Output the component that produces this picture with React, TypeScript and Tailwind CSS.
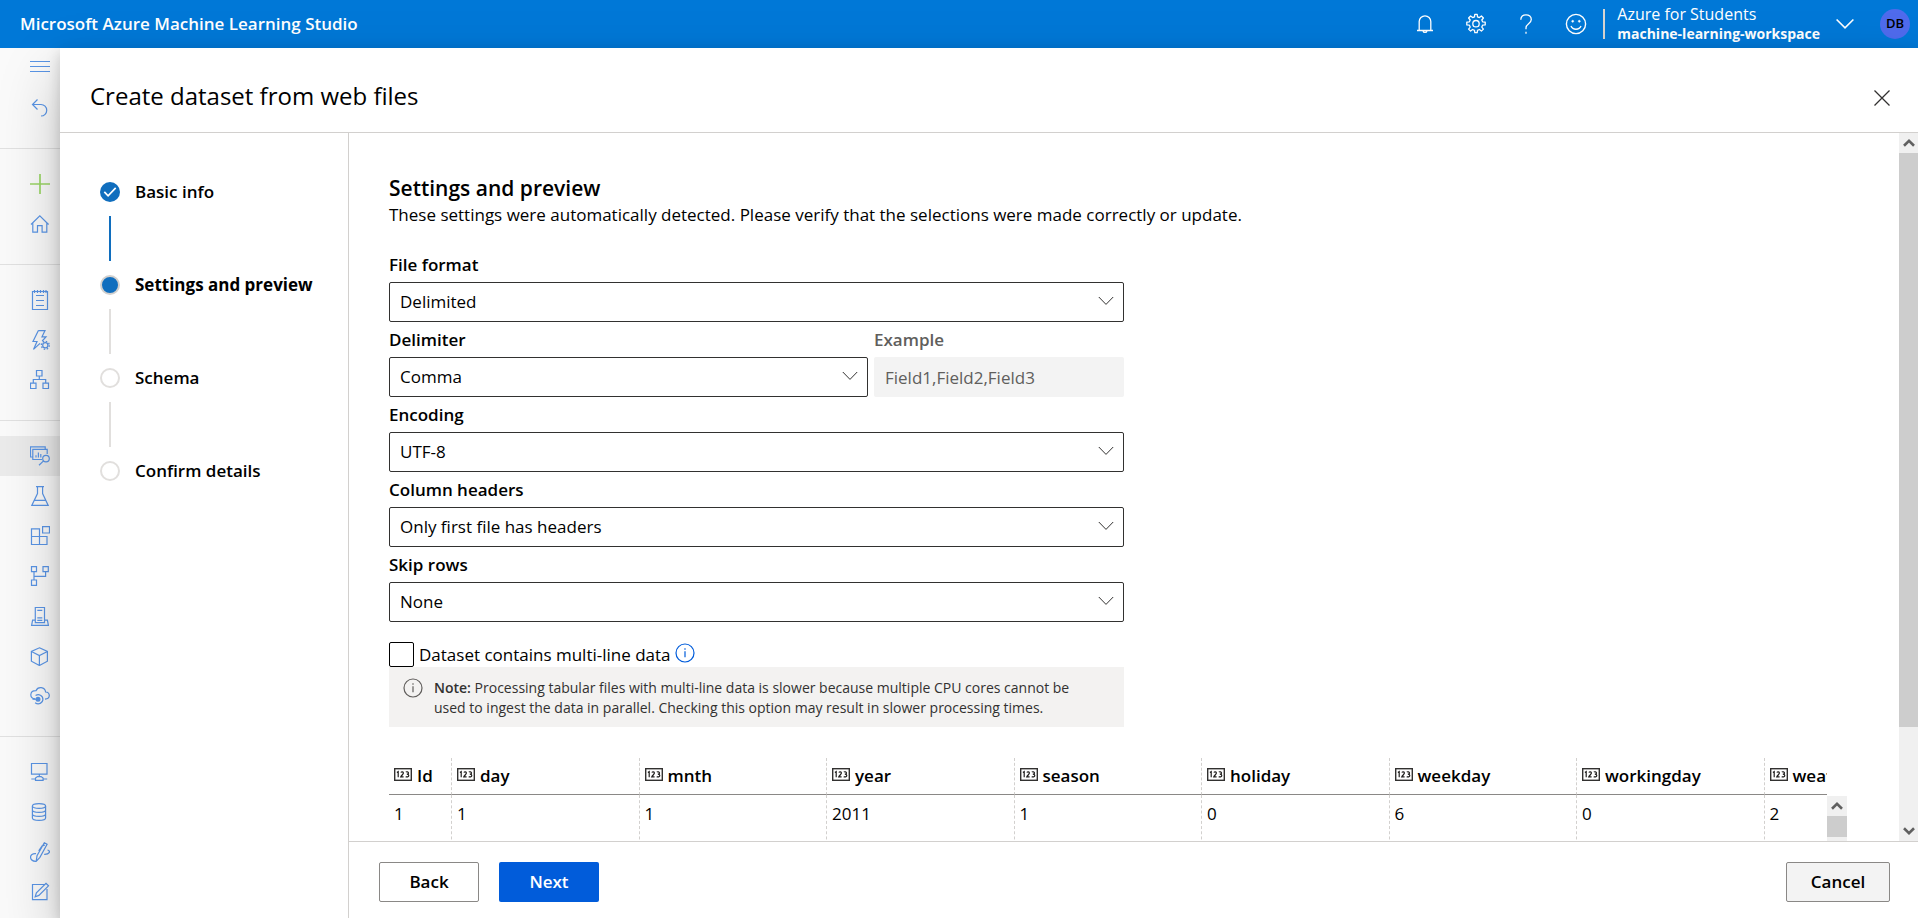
import type { ReactNode } from "react";

const fontStack = "font-['Open_Sans','Noto_Sans',sans-serif]";

function NavIcon({ children }: { children: ReactNode }) {
  return (
    <svg
      viewBox="0 0 20 20"
      className="size-5"
      fill="none"
      stroke="currentColor"
      strokeWidth="1.2"
      aria-hidden="true"
    >
      {children}
    </svg>
  );
}

type NavItem = { label: string; icon: ReactNode; active?: boolean; accent?: boolean };

const navGroups: NavItem[][] = [
  [
    { label: "Menu", icon: <path d="M0 3.5h20M0 8.5h20M0 13.5h20" strokeWidth="1" /> },
    { label: "Back", icon: <path d="M7.5 1.5 2.5 6.5l5 5M2.5 6.5H11a5.5 5.5 0 0 1 0 11.5" /> },
  ],
  [
    { label: "New", accent: true, icon: <path d="M10 0v20M0 10h20" strokeWidth="1.7" /> },
    { label: "Home", icon: <path d="M1 10.5 9.8 1.8l8.8 8.7M2.8 9v9.2h4.7v-6.5h4.6v6.5h4.7V9" /> },
  ],
  [
    {
      label: "Notebooks",
      icon: (
        <>
          <path d="M2.5 1.5h15v18h-15zM6 5.5h8M6 10.5h8M6 15.5h8" />
          <path d="M4.5 0v3M7.5 0v3M10.5 0v3M13.5 0v3M16 0v3" />
        </>
      ),
    },
    {
      label: "Automated ML",
      icon: (
        <>
          <path d="M8.4.6H15l-3 6.2h4L12.2 11M8.4.6 3 11.5h4L3.5 19.4l6.5-6" />
          <circle cx="15.3" cy="15.3" r="2.6" />
          <circle cx="15.3" cy="15.3" r="4" strokeDasharray="1.5 1.64" strokeWidth="1.3" />
        </>
      ),
    },
    {
      label: "Designer",
      icon: <path d="M6.5.5H12V6H6.5zM.5 13.2H6v5.3H.5zM13 13.2h5.5v5.3H13zM9.3 6v3.5M3.3 13.2V9.5h12.4v3.7" />,
    },
  ],
  [
    {
      label: "Datasets",
      active: true,
      icon: (
        <>
          <path d="M2.5 11H.5V.8h14.7v2.4M12 13.5H2.8V3.4h14.4V8M6 11.5V9.2M8.4 11.5V6.4M10.8 11.5V8" />
          <circle cx="16" cy="12.6" r="3.3" />
          <path d="m13.6 14.9-4.6 4.3" />
        </>
      ),
    },
    {
      label: "Experiments",
      icon: <path d="M6 .6h8M7.5.6v6.9L1.8 19.4h16.4L12.6 7.5V.6M4.2 14.3h11.6" />,
    },
    {
      label: "Pipelines",
      icon: <path d="M1.5 2.8h8v15.7h-8zM1.5 10.5H17v8H9.5M12.6.6h6.9V7h-6.9z" />,
    },
    {
      label: "Branches",
      icon: <path d="M1.5.6h5v5h-5zM13 .6h5.3v5H13zM1.5 14h5v5.3h-5zM4 5.6V14M4 10.4h11.6V5.6" />,
    },
    {
      label: "Models",
      icon: <path d="M5.3 1.5h9.2v15.2H5.3zM5.3 14.2H2.6l-1 5.2h16.8l-1-5.2h-2.9M7.3 4.4h5M7.3 11.8h5M7.3 14.3h5" />,
    },
    { label: "Packages", icon: <path d="m9.400 1.800 8 3.700v9.700l-8 4.300-8-4.300V5.500zM1.400 5.500l8 4 8-4M9.400 9.500v10" /> },
    {
      label: "Endpoints",
      icon: (
        <>
          <path d="M5 12.800C-.8 12.200-.6 4.600 6 4.700c1.800-4.600 9-4 9.600 1.300 4.700.3 5.300 6.800-.6 7.200" />
          <path d="M5.600 9.600c3-2 7.300-.3 7.300 3.700s-4.500 5.700-7.800 3.400" />
          <circle cx="8" cy="13.200" r="1.900" fill="currentColor" />
          <path d="M2.500 13.200H7" />
        </>
      ),
    },
  ],
  [
    {
      label: "Compute",
      icon: <path d="M1.500 1.500H17v10.700H1.500zM9.300 12.200v2.500M1.300 17h4.200M13 17h4.200M5.500 18.400v-2.300l2-1.500h3.600l2 1.500v2.300z" />,
    },
    {
      label: "Datastores",
      icon: (
        <>
          <ellipse cx="9" cy="4" rx="6.600" ry="2.400" />
          <path d="M2.400 4v12c0 3.200 13.200 3.200 13.200 0V4M2.400 8c0 3.200 13.200 3.200 13.200 0M2.400 12c0 3.200 13.200 3.200 13.200 0" />
        </>
      ),
    },
    {
      label: "Data labeling",
      icon: <path d="m6.200 19.300.8-5.500L14.300.8l2.800 1.500-7.200 13zM8.700 8.800l3.500-5 2.600-.6M6 11.600c-7.200-.8-7.200 7.200-.4 7.800M17.500 8c3.600 1 2 4.600-3.300 4.400" />,
    },
    {
      label: "Linked services",
      icon: <path d="M15 2.500H2.500v15.200H17V7M5.200 14.700l1.200-3.900L16 1.300l2.500 2.500-9.600 9.600z" />,
    },
  ],
];

function SideNav() {
  return (
    <nav className="w-[60px] shrink-0 bg-[#fafafa]" aria-label="Main">
      {navGroups.map((group, g) => (
        <ul
          key={g}
          className={g === 0 ? "pb-5" : "border-t border-[#e1e1e1] pt-[15px] pb-5"}
        >
          {group.map((item) => (
            <li key={item.label} className={item.active ? "bg-[#ebebeb]" : ""}>
              <a
                href="#"
                aria-label={item.label}
                className={
                  item.accent
                    ? "flex h-10 items-center justify-center pl-5 text-[#9ad566]"
                    : "flex h-10 items-center justify-center pl-5 text-[#5a95e6]"
                }
              >
                <NavIcon>{item.icon}</NavIcon>
              </a>
            </li>
          ))}
        </ul>
      ))}
    </nav>
  );
}

function TopBar() {
  return (
    <header className="flex h-12 shrink-0 items-center justify-between bg-[#0078d7] pl-5 pr-2 text-white">
      <div className="text-[17px] font-semibold">Microsoft Azure Machine Learning Studio</div>
      <div className="flex items-center">
        <div className="flex items-center gap-[30px] pr-4">
          <button type="button" aria-label="Notifications">
            <svg viewBox="0 0 20 20" className="size-5" fill="none" stroke="currentColor" strokeWidth="1.3">
              <path d="M2 16.500h16M4.200 16.500V7.600a5.800 5.800 0 0 1 11.600 0v8.900M8 16.800c.4 2.200 3.600 2.200 4 0" />
            </svg>
          </button>
          <button type="button" aria-label="Settings">
            <svg
              viewBox="0 0 22 22"
              className="size-[22px]"
              fill="none"
              stroke="currentColor"
              strokeWidth="1.3"
              strokeLinejoin="round"
            >
              <path d="M9.500 3.800 9.800 1.300h2.400l.3 2.500 1.900.8 2-1.600 2 2-1.600 2 .8 1.800 2.600.3v2.800l-2.600.3-.8 1.900 1.600 2-2 2-2-1.600-1.900.8-.3 2.400H9.800l-.3-2.400-1.900-.8-2 1.600-2-2 1.600-2-.8-1.900-2.600-.3V9.100l2.600-.3.800-1.800-1.600-2 2-2 2 1.600z" />
              <circle cx="11" cy="10.700" r="3.200" />
            </svg>
          </button>
          <button type="button" aria-label="Help">
            <svg viewBox="0 0 18 20" className="h-5 w-[18px]" fill="none" stroke="currentColor" strokeWidth="1.3">
              <path d="M3.800 5.800C3.800 2.500 6 .8 9 .8s5.300 1.800 5.300 4.600c0 4-5.300 4.500-5.300 8.300v1.500M9 17.800v2" />
            </svg>
          </button>
          <button type="button" aria-label="Feedback">
            <svg viewBox="0 0 22 22" className="size-[22px]" fill="none" stroke="currentColor" strokeWidth="1.4">
              <circle cx="11" cy="11" r="9.6" />
              <path d="M6 13c1.800 4.300 8.200 4.300 10 0" />
              <circle cx="7.700" cy="8.300" r="1" fill="currentColor" strokeWidth="0.5" />
              <circle cx="14.300" cy="8.300" r="1" fill="currentColor" strokeWidth="0.5" />
            </svg>
          </button>
        </div>
        <button type="button" className="flex items-center text-left">
          <span className="mr-3 h-[30px] w-[2px] bg-[#d8d5d2]" />
          <span className="mr-4 block">
            <span className="block text-[16px] leading-5">Azure for Students</span>
            <span className="block text-[14px] leading-5 font-bold">machine-learning-workspace</span>
          </span>
          <svg viewBox="0 0 18 12" className="h-3 w-[18px]" fill="none" stroke="currentColor" strokeWidth="1.6">
            <path d="m.6 1.500 8.400 8.400 8.400-8.400" />
          </svg>
        </button>
        <span className="ml-[26px] flex size-[30px] items-center justify-center rounded-full bg-[#4f6bed] text-[13px] font-semibold text-black">
          DB
        </span>
      </div>
    </header>
  );
}

function Steps() {
  const steps = ["Basic info", "Settings and preview", "Schema", "Confirm details"];
  return (
    <ol className="w-[289px] shrink-0 border-r border-[#d2d0ce] pt-[49px] pl-10">
      {steps.map((step, i) => (
        <li key={step}>
          <div className="flex h-5 items-center gap-[15px]">
            {i === 0 && (
              <svg viewBox="0 0 20 20" className="size-5" aria-hidden="true">
                <circle cx="10" cy="10" r="10" fill="#106ebe" />
                <path d="m4.300 9.800 3.800 4 7.600-7.900" fill="none" stroke="#fff" strokeWidth="1.7" />
              </svg>
            )}
            {i === 1 && <span className="size-5 rounded-full border-2 border-[#d2d0ce] bg-[#106ebe]" />}
            {i > 1 && <span className="size-5 rounded-full border-2 border-[#e1dfdd] bg-white" />}
            <span className={i === 1 ? "text-[17px] font-bold" : "text-[17px] font-semibold"}>{step}</span>
          </div>
          {i < 3 && (
            <div
              className={
                i === 0
                  ? "my-[14px] ml-[9px] h-[45px] w-[2px] bg-[#106ebe]"
                  : "my-[14px] ml-[9px] h-[45px] w-[2px] bg-[#e1dfdd]"
              }
            />
          )}
        </li>
      ))}
    </ol>
  );
}

function SelectField({ id, label, value }: { id: string; label: string; value: string }) {
  return (
    <div className="min-w-0 flex-1">
      <label htmlFor={id} className="flex h-[35px] items-center text-[17px] font-semibold">
        {label}
      </label>
      <div className="relative">
        <select
          id={id}
          defaultValue={value}
          className="block h-10 w-full appearance-none rounded-[2px] border border-[#323130] bg-white pr-10 pl-[10px] text-[17px]"
        >
          <option>{value}</option>
        </select>
        <svg
          viewBox="0 0 16 10"
          className="pointer-events-none absolute top-[14px] right-[10px] h-[10px] w-4"
          fill="none"
          stroke="#323130"
          strokeWidth="1"
        >
          <path d="m.8 1 7.200 7.400L15.200 1" />
        </svg>
      </div>
    </div>
  );
}

function InfoGlyph() {
  return (
    <svg viewBox="0 0 20 20" className="size-5" fill="none" stroke="currentColor" strokeWidth="1.2" aria-hidden="true">
      <circle cx="10" cy="10" r="9" />
      <path d="M10 8.200v6M10 5.300v1.500" />
    </svg>
  );
}

const columns: [string, string][] = [
  ["Id", "1"],
  ["day", "1"],
  ["mnth", "1"],
  ["year", "2011"],
  ["season", "1"],
  ["holiday", "0"],
  ["weekday", "6"],
  ["workingday", "0"],
  ["weathersit", "2"],
];

function PreviewTable() {
  return (
    <div className="mt-[31px] flex">
      <div className="min-w-0 flex-1 overflow-hidden">
        <table className="w-[1562px] table-fixed border-separate border-spacing-0 text-left text-[17px]">
          <thead>
            <tr>
              {columns.map(([name], i) => (
                <th
                  key={name}
                  scope="col"
                  className={
                    i === 0
                      ? "h-[37px] w-[62px] border-b border-b-[#8a8886] px-[5px] py-0 font-semibold"
                      : "h-[37px] border-b border-l border-b-[#8a8886] border-l-[#d2d0ce] px-[5px] py-0 font-semibold [border-left-style:dashed]"
                  }
                >
                  <span className="flex items-center gap-[5px]">
                    <svg viewBox="0 0 18 13" className="mb-[3px] h-[13px] w-[18px] shrink-0" aria-hidden="true">
                      <rect x=".7" y=".7" width="16.6" height="11.6" fill="none" stroke="#323130" strokeWidth="1.4" />
                      <path
                        d="m2.900 4.600 1.300-.9v5.600M6.800 4.500c.8-1 2.600-.8 2.600.5 0 1.200-1.800 2.200-2.600 3.800h2.800M11.800 4c1-.5 2.700-.3 2.700 1 0 .9-.9 1.200-1.700 1.200 1 0 2 .3 2 1.400 0 1.400-2 1.600-3.100 1"
                        fill="none"
                        stroke="#201f1e"
                        strokeWidth="1.2"
                      />
                    </svg>
                    {name}
                  </span>
                </th>
              ))}
            </tr>
          </thead>
          <tbody>
            <tr>
              {columns.map(([name, value], i) => (
                <td
                  key={name}
                  className={
                    i === 0
                      ? "h-[60px] px-[5px] pt-[6px] pb-0 align-top"
                      : "h-[60px] border-l border-l-[#d2d0ce] px-[5px] pt-[6px] pb-0 align-top [border-left-style:dashed]"
                  }
                >
                  {value}
                </td>
              ))}
            </tr>
          </tbody>
        </table>
      </div>
      <div className="mt-[38px] w-5 shrink-0 bg-[#f0f0f0]" aria-hidden="true">
        <ScrollArrow up />
        <div className="h-[21px] bg-[#cdcdcd]" />
      </div>
    </div>
  );
}

function ScrollArrow({ up = false }: { up?: boolean }) {
  return (
    <div className="flex h-5 items-center justify-center">
      <svg viewBox="0 0 12 8" className="h-2 w-3" fill="none" stroke="#606060" strokeWidth="2.6">
        <path d={up ? "M1 6.800 6 1.900l5 4.900" : "M1 1.200 6 6.100l5-4.900"} />
      </svg>
    </div>
  );
}

function SettingsForm() {
  return (
    <div className="min-w-0 flex-1 overflow-hidden pt-10 pr-[52px] pl-10">
      <h2 className="text-[21px] leading-[30px] font-semibold">Settings and preview</h2>
      <p className="text-[17px] leading-6">
        These settings were automatically detected. Please verify that the selections were made correctly or update.
      </p>
      <form className="mt-5 max-w-[735px]">
        <SelectField id="file-format" label="File format" value="Delimited" />
        <div className="flex gap-[6px]">
          <SelectField id="delimiter" label="Delimiter" value="Comma" />
          <div className="w-[250px] shrink-0">
            <label htmlFor="example" className="flex h-[35px] items-center text-[17px] font-semibold text-[#605e5c]">
              Example
            </label>
            <input
              id="example"
              readOnly
              defaultValue="Field1,Field2,Field3"
              className="block h-10 w-full rounded-[2px] bg-[#f3f3f3] px-[11px] text-[17px] text-[#605e5c]"
            />
          </div>
        </div>
        <SelectField id="encoding" label="Encoding" value="UTF-8" />
        <SelectField id="column-headers" label="Column headers" value="Only first file has headers" />
        <SelectField id="skip-rows" label="Skip rows" value="None" />
        <div className="mt-5 flex items-center">
          <input
            id="multi-line"
            type="checkbox"
            className="size-[25px] appearance-none rounded-[2px] border border-black bg-white"
          />
          <label htmlFor="multi-line" className="pl-[5px] text-[17px] leading-6">
            Dataset contains multi-line data
          </label>
          <button type="button" aria-label="About multi-line data" className="mb-1 ml-1 text-[#015cda]">
            <InfoGlyph />
          </button>
        </div>
        <div className="flex h-[60px] items-start gap-[11px] bg-[#f3f2f1] pt-[11px] pr-10 pl-[14px] text-[#323130]">
          <span className="shrink-0 text-[#605e5c]">
            <InfoGlyph />
          </span>
          <p className="text-[14px] leading-5">
            <strong className="font-semibold">Note:</strong> Processing tabular files with multi-line data is slower
            because multiple CPU cores cannot be used to ingest the data in parallel. Checking this option may result in
            slower processing times.
          </p>
        </div>
      </form>
      <PreviewTable />
    </div>
  );
}

export default function App() {
  return (
    <div className={`flex h-screen flex-col overflow-hidden bg-white text-black ${fontStack}`}>
      <TopBar />
      <div className="flex min-h-0 flex-1">
        <SideNav />
        <main className="relative z-10 flex min-w-0 flex-1 flex-col bg-white shadow-[0_26px_58px_rgba(0,0,0,0.22),0_5px_14px_rgba(0,0,0,0.18)]">
          <div className="flex h-[85px] shrink-0 items-center justify-between border-b border-[#d2d0ce] pt-3 pr-7 pl-[30px]">
            <h1 className="text-2xl font-normal">Create dataset from web files</h1>
            <button type="button" aria-label="Close" className="mt-1">
              <svg viewBox="0 0 16 16" className="size-4" fill="none" stroke="#323130" strokeWidth="1.3">
                <path d="m.5.500 15 15M15.500.500l-15 15" />
              </svg>
            </button>
          </div>
          <div className="flex min-h-0 flex-1">
            <Steps />
            <div className="flex min-w-0 flex-1 flex-col">
              <div className="flex min-h-0 flex-1">
                <SettingsForm />
                <div className="flex w-[19px] shrink-0 flex-col bg-[#f0f0f0]" aria-hidden="true">
                  <ScrollArrow up />
                  <div className="min-h-0 flex-1">
                    <div className="h-[86%] bg-[#cdcdcd]" />
                  </div>
                  <ScrollArrow />
                </div>
              </div>
              <footer className="flex shrink-0 items-center justify-between border-t border-[#d2d0ce] pt-5 pr-7 pb-4 pl-[30px] text-[17px] font-semibold">
                <div className="flex gap-5">
                  <button type="button" className="h-10 w-[100px] rounded-[2px] border border-[#8a8886] bg-white">
                    Back
                  </button>
                  <button type="button" className="h-10 w-[100px] rounded-[2px] bg-[#015cda] text-white">
                    Next
                  </button>
                </div>
                <button type="button" className="h-10 w-[104px] rounded-[2px] border border-[#8a8886] bg-[#f3f3f3]">
                  Cancel
                </button>
              </footer>
            </div>
          </div>
        </main>
      </div>
    </div>
  );
}
